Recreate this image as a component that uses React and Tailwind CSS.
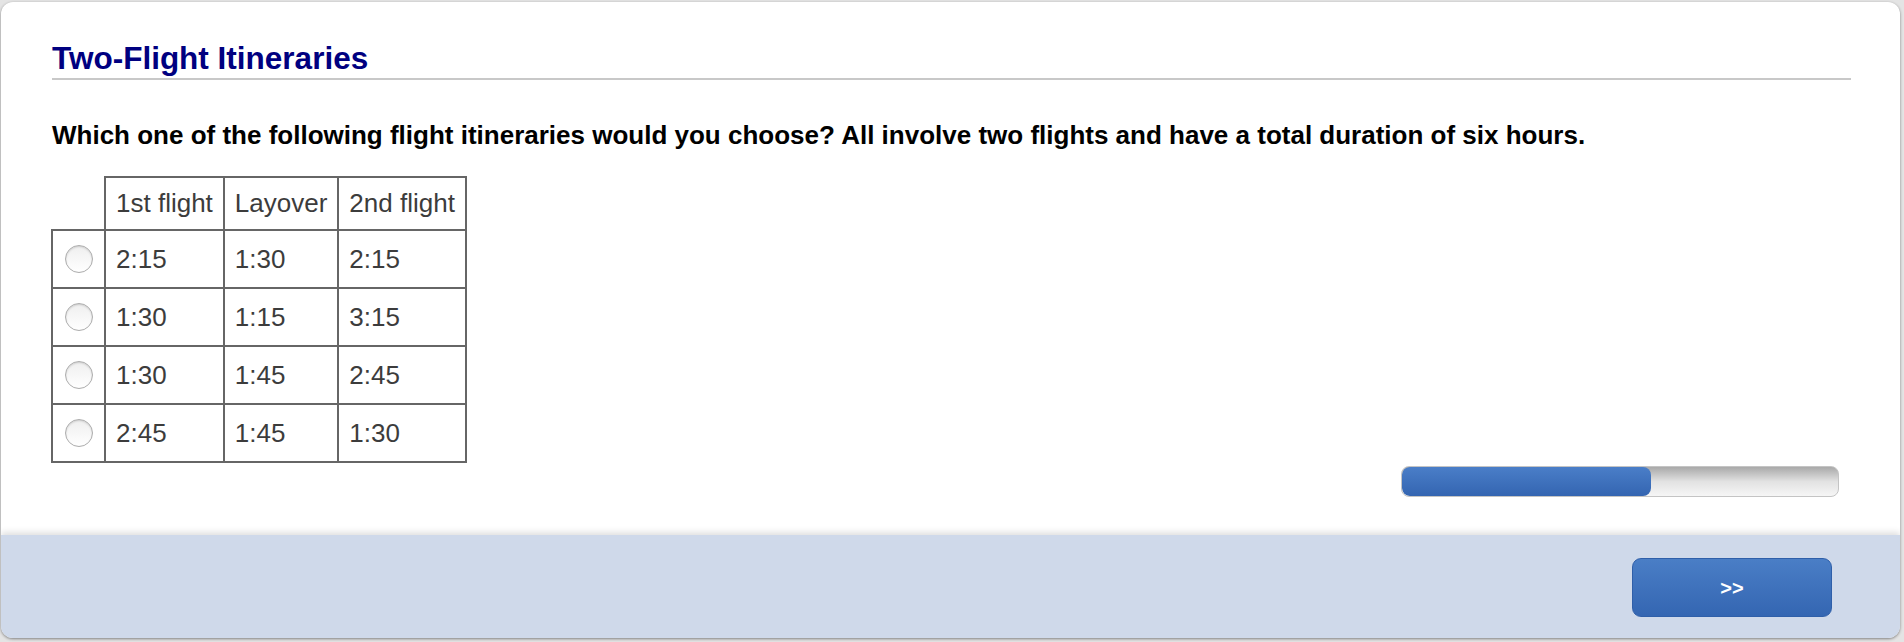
const rows = [
  ['2:15', '1:30', '2:15'],
  ['1:30', '1:15', '3:15'],
  ['1:30', '1:45', '2:45'],
  ['2:45', '1:45', '1:30'],
];

function Radio() {
  return (
    <span className="block w-[28px] h-[28px] mx-auto rounded-full border border-[#adadad] bg-gradient-to-b from-[#efefef] to-white shadow-[inset_0_1px_2px_rgba(0,0,0,0.15)]" />
  );
}

export default function App() {
  const progress = 57;

  return (
    <div className="w-[1904px] h-[642px] bg-[#e4e4e4] pl-[1px] pt-[2px] font-['Liberation_Sans',Arial,sans-serif]">
      <div className="w-[1899px] h-[636px] rounded-[12px] bg-white shadow-[0_1px_3px_rgba(0,0,0,0.45)] overflow-hidden flex flex-col">
        <div className="h-[533px] pl-[51px] pr-[49px] pt-[41px]">
          <h1 className="text-[31.5px] leading-none font-bold text-[#000080]">Two-Flight Itineraries</h1>
          <div className="mt-[3px] h-[2px] bg-[#c8c8c8]" />
          <p className="mt-[42px] text-[26px] leading-none font-bold text-black">
            Which one of the following flight itineraries would you choose? All involve two flights and have a total duration of six hours.
          </p>

          <table className="-ml-[1px] mt-[28px] table-fixed border-collapse text-[26px] leading-none text-[#3c3c3c] whitespace-nowrap">
            <colgroup>
              <col className="w-[53px]" />
              <col className="w-[118px]" />
              <col className="w-[113px]" />
              <col className="w-[127px]" />
            </colgroup>
            <thead>
              <tr className="h-[53px]">
                <th className="p-0" />
                <th className="border-2 border-[#666] px-[10px] text-left font-normal">1st flight</th>
                <th className="border-2 border-[#666] px-[10px] text-left font-normal">Layover</th>
                <th className="border-2 border-[#666] px-[10px] text-left font-normal">2nd flight</th>
              </tr>
            </thead>
            <tbody>
              {rows.map((r, i) => (
                <tr key={i} className="h-[58px]">
                  <td className="border-2 border-[#666] p-0">
                    <Radio />
                  </td>
                  {r.map((v, j) => (
                    <td key={j} className="border-2 border-[#666] px-[10px]">{v}</td>
                  ))}
                </tr>
              ))}
            </tbody>
          </table>

          <div className="flex justify-end pr-[12px] mt-[3px]">
            <div className="w-[438px] h-[31px] rounded-[8px] border border-[#c4c4c4] bg-gradient-to-b from-[#a9a9a9] via-[#e2e2e2] to-[#f6f6f6] overflow-hidden">
              <div
                className="h-full rounded-[8px] bg-gradient-to-b from-[#4a7ec8] to-[#3465b1]"
                style={{ width: `${progress}%` }}
              />
            </div>
          </div>
        </div>

        <div className="h-[103px] bg-[#cfd9ea] shadow-[0_-3px_6px_rgba(0,0,0,0.12)] flex items-start justify-end pt-[23px] pr-[68px]">
          <button className="w-[200px] h-[59px] rounded-[9px] border border-[#2f5fa9] bg-gradient-to-b from-[#4a7ec6] to-[#3466b2] text-white text-[20px] font-bold">
            &gt;&gt;
          </button>
        </div>
      </div>
    </div>
  );
}
